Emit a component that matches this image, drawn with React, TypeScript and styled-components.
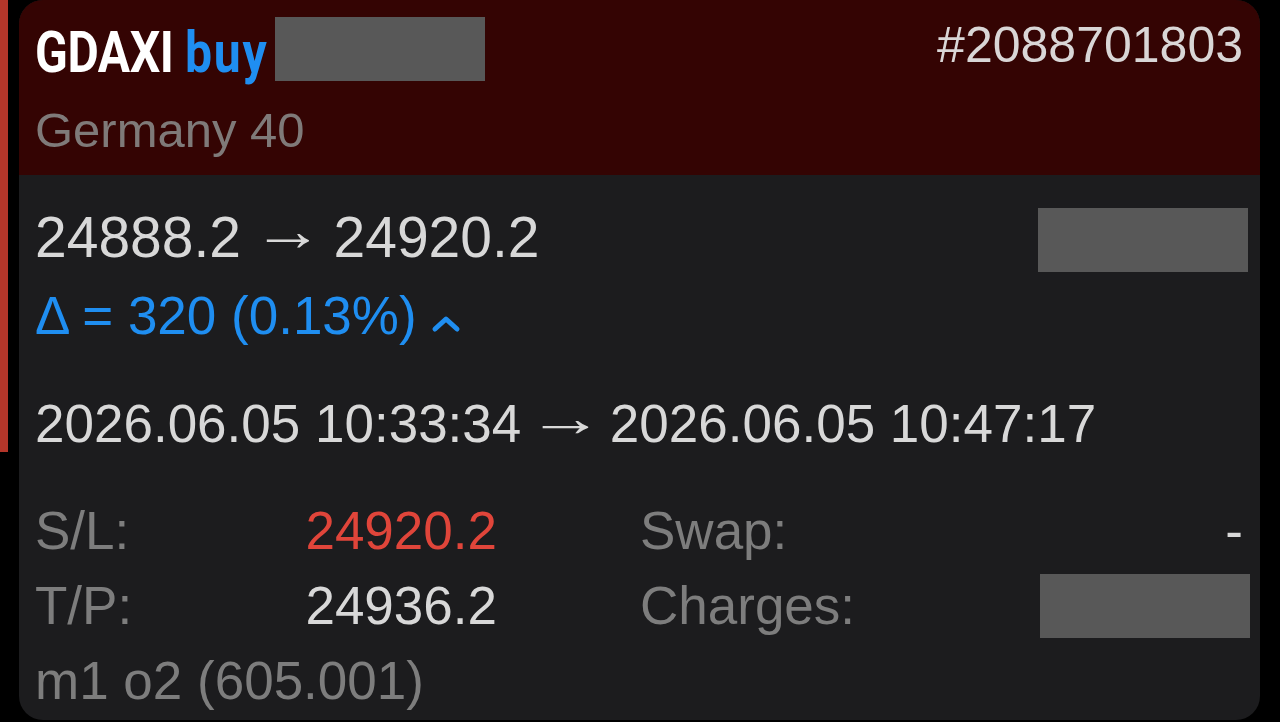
import { createGlobalStyle, styled } from 'styled-components';

const GlobalStyle = createGlobalStyle`
	html, body {
		margin: 0;
		padding: 0;
		background: #000;
	}
	body {
		font-family: 'Liberation Sans', Arial, sans-serif;
		-webkit-font-smoothing: antialiased;
	}
`;

interface IStatProps {
	label: string;
	value?: string;
	tone?: 'loss' | 'plain';
	hidden?: boolean;
}

const Stat = ({ label, value, tone = 'plain', hidden }: IStatProps) => (
	<StatCell>
		<Label>{label}</Label>
		{hidden ? <Redacted $width={210} $push={7} /> : <Value $tone={tone}>{value}</Value>}
	</StatCell>
);

const ChevronUp = () => (
	<Chevron width="30" height="18" viewBox="0 0 30 18">
		<polyline points="4,14 15,4 26,14" fill="none" stroke="currentColor" strokeWidth="5" strokeLinecap="round" strokeLinejoin="round" />
	</Chevron>
);

const App = () => (
	<>
		<GlobalStyle />
		<Page>
			<SideMark />
			<Card>
				<Header>
					<TopRow>
						<TitleGroup>
							<TitleBox>
								<Title>
									GDAXI <Side>buy</Side>
								</Title>
							</TitleBox>
							<Redacted $width={210} />
						</TitleGroup>
						<Ticket>#2088701803</Ticket>
					</TopRow>
					<Subtitle>Germany 40</Subtitle>
				</Header>
				<Body>
					<PriceRow>
						<Prices>
							24888.2 <Arrow $stretch={1.25}>→</Arrow> 24920.2
						</Prices>
						<Redacted $width={210} />
					</PriceRow>
					<Delta>
						Δ = 320 (0.13%)
						<ChevronUp />
					</Delta>
					<Dates>
						2026.06.05 10:33:34 <Arrow $stretch={1.45}>→</Arrow> 2026.06.05 10:47:17
					</Dates>
					<StatsGrid>
						<Stat label="S/L:" value="24920.2" tone="loss" />
						<Stat label="Swap:" value="-" />
						<Stat label="T/P:" value="24936.2" />
						<Stat label="Charges:" hidden />
						<Comment>m1 o2 (605.001)</Comment>
					</StatsGrid>
				</Body>
			</Card>
		</Page>
	</>
);

export default App;

const Page = styled.div`
	display: flex;
	align-items: flex-start;
	gap: 11px;
	width: 1280px;
	height: 722px;
	overflow: hidden;
`;

const SideMark = styled.div`
	width: 8px;
	height: 452px;
	background: #b4362a;
	flex-shrink: 0;
`;

const Card = styled.div`
	width: 1241px;
	height: 720px;
	border-radius: 24px;
	overflow: hidden;
	background: #1c1c1e;
	display: flex;
	flex-direction: column;
`;

const Header = styled.div`
	height: 175px;
	box-sizing: border-box;
	padding: 17px 17px 0 16px;
	background: #340403;
`;

const TopRow = styled.div`
	display: flex;
	justify-content: space-between;
	align-items: flex-start;
`;

const TitleGroup = styled.div`
	display: flex;
	align-items: flex-start;
`;

const TitleBox = styled.div`
	width: 240px;
	height: 64px;
	margin-top: 3px;
	white-space: nowrap;
`;

const Title = styled.span`
	display: inline-block;
	font-family: Roboto, 'Liberation Sans', sans-serif;
	font-weight: 700;
	font-size: 58px;
	line-height: 64px;
	letter-spacing: -0.5px;
	color: #ffffff;
	transform: scaleX(0.83);
	transform-origin: left center;
`;

const Side = styled.span`
	color: #1f8ef1;
	letter-spacing: 2px;
`;

const Redacted = styled.div<{ $width: number; $push?: number }>`
	width: ${p => p.$width}px;
	height: 64px;
	background: #585858;
	margin-right: ${p => -(p.$push || 0)}px;
	flex-shrink: 0;
`;

const Ticket = styled.div`
	margin-top: 3px;
	font-size: 50px;
	line-height: 50px;
	color: #d9d6d6;
`;

const Subtitle = styled.div`
	margin-top: 22px;
	font-size: 49px;
	line-height: 49px;
	color: #7f7a79;
`;

const Body = styled.div`
	flex: 1;
	padding: 33px 12px 0 16px;
	display: flex;
	flex-direction: column;
`;

const PriceRow = styled.div`
	display: flex;
	justify-content: space-between;
	align-items: flex-start;
`;

const Prices = styled.div`
	margin-top: 1px;
	font-size: 57px;
	line-height: 57px;
	color: #d8d8d8;
`;

const Arrow = styled.span<{ $stretch: number }>`
	display: inline-block;
	margin: 0 ${p => ((p.$stretch - 1) * 0.13).toFixed(3)}em;
	transform: translateY(-0.12em) scaleX(${p => p.$stretch});
`;

const Delta = styled.div`
	margin-top: 17px;
	display: flex;
	align-items: baseline;
	gap: 14px;
	font-size: 53px;
	line-height: 53px;
	color: #1f8ef1;
`;

const Chevron = styled.svg`
	align-self: center;
	margin-top: 16px;
`;

const Dates = styled.div`
	margin-top: 55px;
	font-size: 53px;
	line-height: 53px;
	color: #d8d8d8;
`;

const StatsGrid = styled.div`
	margin-top: 43px;
	margin-right: 5px;
	display: grid;
	grid-template-columns: 462px 1fr;
	column-gap: 143px;
	font-size: 53px;
	line-height: 75px;
`;

const StatCell = styled.div`
	display: flex;
	justify-content: space-between;
	align-items: center;
`;

const Label = styled.span`
	color: #7d7d7d;
`;

const Value = styled.span<{ $tone: 'loss' | 'plain' }>`
	color: ${p => (p.$tone === 'loss' ? '#e0453a' : '#d8d8d8')};
`;

const Comment = styled.div`
	grid-column: 1 / -1;
	color: #7d7d7d;
`;
